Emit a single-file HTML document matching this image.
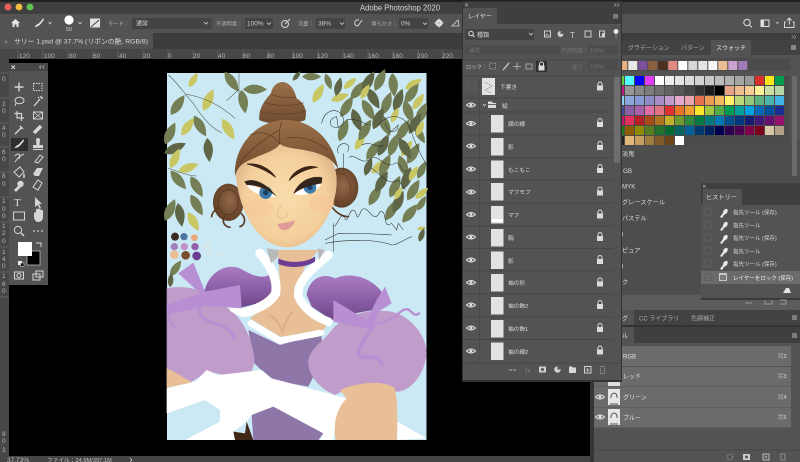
<!DOCTYPE html>
<html lang="ja"><head><meta charset="utf-8"><title>Adobe Photoshop 2020</title>
<style>
html,body{margin:0;padding:0;background:#000;width:800px;height:462px;overflow:hidden}
svg{display:block;filter:blur(.35px)}
text{font-family:"Liberation Sans","Noto Sans CJK JP",sans-serif;fill:#cfcfcf;font-size:6px}
.r{fill:#b5b5b5;font-size:6.5px}
.ic{fill:none;stroke:#d6d6d6}
.f{fill:#d6d6d6}
.o{font-size:5.300px;fill:#b0b0b0}
.ly{font-size:5.700px;fill:#dcdcdc}
.h{font-size:5.500px;fill:#d6d6d6}
.t{font-size:6px;fill:#a8a8a8}
.li{font-size:6.200px;fill:#dcdcdc}
.dim{font-size:5.500px;fill:#737373}
</style></head><body>
<svg width="800" height="462" viewBox="0 0 800 462" xmlns="http://www.w3.org/2000/svg">
<defs>
<path id="l" d="M-36,0 Q-6,-28 36,0 Q-6,28 -36,0Z"/>
<g id="eye"><path d="M-4.500,0 Q0,-4 4.500,0 Q0,4 -4.500,0Z" fill="none" stroke="#e0e0e0" stroke-width="1"/><circle r="1.400" fill="#e0e0e0"/></g>
<g id="lock"><rect x="-3" y="-1" width="6" height="5" fill="#dcdcdc"/><path d="M-2,-1 V-2.500 A2,2 0 0 1 2,-2.500 V-1" fill="none" stroke="#dcdcdc"/></g>
<pattern id="ck" width="3" height="3" patternUnits="userSpaceOnUse"><rect width="3" height="3" fill="#ececec"/><rect width="1.500" height="1.500" fill="#d8d8d8"/><rect x="1.500" y="1.500" width="1.500" height="1.500" fill="#d8d8d8"/></pattern>
<linearGradient id="sh" x1="0" y1="0" x2="0" y2="1"><stop offset="0" stop-color="#a97bc2"/><stop offset=".55" stop-color="#8a5ea6"/><stop offset="1" stop-color="#6d4688"/></linearGradient>
<radialGradient id="sk" cx=".5" cy=".52" r=".56"><stop offset="0" stop-color="#f9dcaa"/><stop offset=".72" stop-color="#f3cf9c"/><stop offset="1" stop-color="#e0b688"/></radialGradient>
<linearGradient id="hr" x1="0" y1="0" x2="0" y2="1"><stop offset="0" stop-color="#9a7049"/><stop offset="1" stop-color="#6f4a2e"/></linearGradient>
<radialGradient id="bn" cx=".55" cy=".45" r=".6"><stop offset="0" stop-color="#96694a"/><stop offset="1" stop-color="#5a3a22"/></radialGradient>
<g id="brsh"><path d="M-3,4 C-1,1 1,-1 3,-3 L4,-5 L5,-3 C3,-1 1,3 -3,4Z" fill="#e0e0e0"/><path d="M-4,4 L-1,1" stroke="#e0e0e0" fill="none"/></g>
<path id="smg" d="M0,10 L3,6 C3,1 10,0 7,6 L4,8 L2,11Z" fill="#e8e8e8"/>
</defs>

<rect width="800" height="462" fill="#000"/>

<!-- art -->
<rect x="167" y="73" width="259.500" height="367" fill="#cbe9f4"/>
<g transform="translate(165,70) scale(.33333)">
<g fill="#757f55">
<use href="#l" transform="translate(38,105) rotate(-55)"/><use href="#l" transform="translate(105,168) rotate(60)"/><use href="#l" transform="translate(15,190) rotate(-65)"/><use href="#l" transform="translate(40,330) rotate(50)"/><use href="#l" transform="translate(95,350) rotate(60)"/><use href="#l" transform="translate(95,405) rotate(60)"/><use href="#l" transform="translate(15,420) rotate(-65)"/><use href="#l" transform="translate(200,35) rotate(55)"/><use href="#l" transform="translate(235,95) rotate(80)"/><use href="#l" transform="translate(270,58)"/><use href="#l" transform="translate(440,20) scale(.8)"/>
</g>
<g fill="#5f6647"><use href="#l" transform="translate(130,240) rotate(85)"/><use href="#l" transform="translate(30,235) rotate(-25)"/><use href="#l" transform="translate(45,435) rotate(80)"/><use href="#l" transform="translate(395,18) rotate(-50) scale(.5)"/></g>
<g fill="#c9c664"><use href="#l" transform="translate(85,30) rotate(-60) scale(.7)"/><use href="#l" transform="translate(130,90) rotate(-65)"/><use href="#l" transform="translate(68,170) rotate(-55) scale(.9)"/><use href="#l" transform="translate(190,178) rotate(60)"/><use href="#l" transform="translate(30,265) rotate(-65) scale(.9)"/><use href="#l" transform="translate(70,293) rotate(-20) scale(.9)"/><use href="#l" transform="translate(85,455) rotate(60) scale(.9)"/><use href="#l" transform="translate(460,70) rotate(-60) scale(.9)"/></g>
<!-- right foliage -->
<g fill="#c9c664">
<use href="#l" transform="translate(525,82) rotate(-20) scale(.8)"/><use href="#l" transform="translate(555,40) rotate(-40) scale(.7)"/><use href="#l" transform="translate(745,42) rotate(-30) scale(.8)"/><use href="#l" transform="translate(760,95) rotate(-55) scale(.8)"/><use href="#l" transform="translate(585,215) rotate(-60) scale(.8)"/><use href="#l" transform="translate(725,235) rotate(-55) scale(.8)"/><use href="#l" transform="translate(640,290) rotate(-45) scale(.8)"/><use href="#l" transform="translate(770,370) rotate(-40) scale(.7)"/><use href="#l" transform="translate(770,475) rotate(-10) scale(.4)"/>
</g>
<g fill="#757f55">
<use href="#l" transform="translate(490,35) rotate(70) scale(.7)"/><use href="#l" transform="translate(580,60) rotate(-50)"/><use href="#l" transform="translate(645,30) rotate(-65)"/><use href="#l" transform="translate(685,45) rotate(85)"/><use href="#l" transform="translate(740,70) rotate(-55)"/><use href="#l" transform="translate(545,110) rotate(-60)"/><use href="#l" transform="translate(610,120) rotate(60)"/><use href="#l" transform="translate(665,100) rotate(-70)"/><use href="#l" transform="translate(730,125) rotate(70)"/><use href="#l" transform="translate(770,130) rotate(-65)"/><use href="#l" transform="translate(535,180) rotate(-70)"/><use href="#l" transform="translate(600,180) rotate(-60)"/><use href="#l" transform="translate(660,165) rotate(65)"/><use href="#l" transform="translate(715,180) rotate(-60)"/><use href="#l" transform="translate(765,195) rotate(60) scale(.8)"/><use href="#l" transform="translate(625,240) rotate(-55)"/><use href="#l" transform="translate(685,225) rotate(-70)"/><use href="#l" transform="translate(745,250) rotate(-60)"/><use href="#l" transform="translate(660,285) rotate(-65)"/><use href="#l" transform="translate(715,290) rotate(70)"/><use href="#l" transform="translate(770,300) rotate(-65) scale(.8)"/><use href="#l" transform="translate(630,375) rotate(-60)"/><use href="#l" transform="translate(690,350) rotate(-65)"/><use href="#l" transform="translate(745,360) rotate(-60)"/><use href="#l" transform="translate(680,420) rotate(-60)"/><use href="#l" transform="translate(735,430) rotate(-50)"/><use href="#l" transform="translate(770,400) rotate(-60) scale(.7)"/>
</g>
<g fill="#5f6647">
<use href="#l" transform="translate(520,50) rotate(-75) scale(.8)"/><use href="#l" transform="translate(610,35) rotate(-60)"/><use href="#l" transform="translate(625,85) rotate(60)"/><use href="#l" transform="translate(700,90) rotate(-70)"/><use href="#l" transform="translate(575,150) rotate(70)"/><use href="#l" transform="translate(640,145) rotate(-65)"/><use href="#l" transform="translate(750,160) rotate(-60)"/><use href="#l" transform="translate(655,225) rotate(-65)"/><use href="#l" transform="translate(720,235) rotate(60)"/><use href="#l" transform="translate(610,290) rotate(-70) scale(.8)"/><use href="#l" transform="translate(650,335) rotate(-60)"/><use href="#l" transform="translate(725,325) rotate(-70)"/><use href="#l" transform="translate(770,495) rotate(-70) scale(.6)"/><use href="#l" transform="translate(700,395) rotate(-65)"/>
</g>
<g fill="#c9c664">
<use href="#l" transform="translate(600,65) rotate(-60) scale(.7)"/><use href="#l" transform="translate(690,135) rotate(-65) scale(.7)"/><use href="#l" transform="translate(765,175) rotate(-65) scale(.7)"/><use href="#l" transform="translate(745,310) rotate(-60) scale(.7)"/><use href="#l" transform="translate(700,370) rotate(-60) scale(.6)"/>
</g>
<!-- branches -->
<g fill="none" stroke="#4c4d42" stroke-width="1.600">
<path d="M10,15 C40,40 60,75 85,100 C110,140 140,175 170,188"/><path d="M60,72 C110,80 160,100 210,145"/><path d="M10,295 C40,305 70,318 95,318"/><path d="M222,10 V90 M185,92 L222,58"/>
</g>
<!-- bun top -->
<path d="M283,150 C280,115 300,90 318,70 C322,45 345,30 362,38 C385,48 390,70 395,85 C420,100 428,125 420,150 C390,165 310,165 283,150Z" fill="url(#hr)"/>
<g fill="none" stroke="#5f3d24" stroke-width="2"><path d="M316,72 C340,82 370,84 394,82"/><path d="M297,98 C340,110 390,108 416,98"/><path d="M285,125 C330,135 390,135 424,122"/></g>
<!-- side buns -->
<ellipse cx="190" cy="397" rx="46" ry="56" fill="url(#bn)"/><ellipse cx="190" cy="397" rx="30" ry="38" fill="none" stroke="#5c3a20" stroke-width="3"/>
<ellipse cx="530" cy="353" rx="50" ry="60" fill="url(#bn)"/><ellipse cx="525" cy="353" rx="32" ry="42" fill="none" stroke="#6d4729" stroke-width="3"/>
<path d="M160,410 C150,420 140,430 140,440 M178,440 C170,455 178,470 195,472 M228,430 C245,445 240,465 225,470 M500,410 C515,430 530,440 550,440" fill="none" stroke="#5a3a22" stroke-width="5" stroke-linecap="round"/>
<!-- face -->
<path d="M212,300 C212,230 290,215 365,215 C450,215 518,250 515,340 C512,425 450,532 365,532 C285,532 218,430 212,300Z" fill="url(#sk)"/>
<ellipse cx="280" cy="415" rx="45" ry="28" fill="#f5c796" opacity=".55"/><ellipse cx="470" cy="400" rx="38" ry="28" fill="#f5c796" opacity=".55"/>
<!-- hair dome -->
<path d="M210,318 C205,240 260,160 350,150 C440,145 505,210 520,298 C505,270 480,255 440,245 C400,235 360,235 345,222 C330,245 280,255 245,275 C225,285 215,300 210,318Z" fill="url(#hr)"/>
<g fill="none" stroke="#573720" stroke-width="2"><path d="M345,222 C340,195 345,170 350,155"/><path d="M345,222 C320,190 290,180 255,195"/><path d="M365,205 C400,195 450,210 490,240"/><path d="M340,180 C300,210 260,230 225,280"/></g>
<!-- brows / eyes -->
<path d="M246,282 C280,278 315,295 332,322 C310,305 280,290 246,282Z" fill="#3b2416" stroke="#3b2416" stroke-width="2"/>
<path d="M458,292 C425,282 385,300 372,332 C395,310 425,296 458,292Z" fill="#3b2416" stroke="#3b2416" stroke-width="2"/>
<path d="M245,345 C270,345 315,365 335,380 C310,385 265,375 245,345Z" fill="#fff"/><circle cx="302" cy="368" r="19" fill="#3e7bab"/><circle cx="302" cy="368" r="8" fill="#1d3f62"/>
<path d="M470,340 C450,345 405,355 388,372 C415,380 455,370 470,340Z" fill="#fff"/><circle cx="435" cy="352" r="19" fill="#3e7bab"/><circle cx="435" cy="352" r="8" fill="#1d3f62"/>
<path d="M238,335 C270,320 310,345 335,380 C300,352 270,345 245,345Z" fill="#33241c"/>
<path d="M472,322 C440,315 400,332 385,372 C410,352 440,345 470,340Z" fill="#33241c"/>
<path d="M350,405 C335,420 330,440 348,445 C358,447 365,440 368,430" fill="none" stroke="#e5b088" stroke-width="2"/>
<path d="M337,463 C350,458 375,458 390,450 C385,470 370,482 355,480 C345,478 340,470 337,463Z" fill="#df9b9a"/>
<!-- palette -->
<circle cx="30" cy="500" r="12" fill="#3a2a20"/><circle cx="57" cy="500" r="11" fill="#4f76a0"/><circle cx="88" cy="503" r="10" fill="#e8a878"/><circle cx="28" cy="530" r="11" fill="#a080b8"/><circle cx="58" cy="530" r="11" fill="#c090c8"/><circle cx="90" cy="530" r="11" fill="#9060a8"/><circle cx="28" cy="554" r="13" fill="#eebd94"/><circle cx="62" cy="556" r="13" fill="#7a4f30"/><circle cx="95" cy="558" r="13" fill="#6a3c90"/>
<text x="115" y="552" style="font-size:48px;fill:#dfe2dc">5</text><text x="150" y="560" style="font-size:28px;fill:#dfe2dc">pt</text>
<!-- sketch lines -->
<g fill="none" stroke="#2c2f2e" stroke-width="1.600">
<path d="M470,160 C475,130 500,115 520,125 C545,140 540,175 510,172 C490,170 490,145 515,140 L520,175 M545,150 C570,145 590,155 610,165"/>
<path d="M640,165 C660,135 715,125 735,175 C750,220 770,260 785,285 M660,160 C670,190 695,195 700,165 L672,190"/>
<path d="M520,250 C510,225 540,210 552,230 L548,245 M535,250 V300 M552,262 C575,250 590,290 620,265 C640,250 660,300 690,280 C705,270 715,320 725,300 M590,225 C620,210 640,240 655,225 M620,295 C650,315 670,350 700,330 L722,360"/>
<path d="M508,470 C520,460 525,430 538,440 C548,470 550,420 565,420 C580,425 570,465 590,420 C610,400 625,470 645,425 C670,420 650,480 680,460 L695,480 L700,460 L715,480"/>
<path d="M480,510 L520,490 C570,490 620,490 680,495 M480,520 C560,505 640,510 680,525 C700,525 720,505 742,500 M505,460 V545"/>
</g>
</g>

<g transform="translate(165,250) scale(.33333)">
<use href="#l" transform="translate(32,55) rotate(-55) scale(.8)" fill="#757f55"/><use href="#l" transform="translate(17,90) rotate(-85) scale(.6)" fill="#5f6647"/>
<path d="M340,0 L460,0 L420,50 L388,130 L425,170 L495,215 L470,245 L345,260 L255,205 L310,165 L345,130Z" fill="#e8bf96"/>
<path d="M310,195 C330,200 345,225 352,245 C360,220 370,195 385,185" fill="none" stroke="#dcae82" stroke-width="6"/>
<path d="M118,125 C130,70 180,38 225,55 C260,75 290,90 318,72 L322,130 L300,155 L230,172 L170,165 C150,145 130,130 118,125Z" fill="url(#sh)"/>
<path d="M425,135 C430,90 470,65 510,85 C550,68 610,75 650,125 L625,180 L580,188 L500,210 L440,170Z" fill="url(#sh)"/>
<path d="M250,240 L345,285 L470,250 L470,330 L430,410 L320,390 L268,340Z" fill="#8f76a8"/>
<path d="M5,115 C60,105 120,115 170,165 C230,190 265,270 268,330 C265,370 250,385 210,382 L130,365 L80,395 L5,410Z" fill="#bf9cca"/>
<path d="M500,240 C540,190 620,175 680,185 C740,200 785,260 785,310 C780,370 740,420 700,425 L540,420 L510,435 C450,410 425,360 430,330 C440,290 470,280 500,240Z" fill="#bf9cca"/>
<path d="M5,355 C30,365 60,385 82,397 L5,413Z" fill="#e8bf96"/>
<path d="M5,415 L90,395 L125,360 L160,375 L290,360 L320,385 L545,445 L510,530 L505,570 L465,570 L475,550 L325,470 L260,495 L240,520 L205,545 L210,570 L60,570 L165,515 L165,480 L120,450 L5,490Z" fill="#fff"/>
<path d="M260,495 L325,470 L475,550 L460,570 L265,570Z" fill="#8f76a8"/>
<path d="M205,545 L240,550 L245,515 L265,570 L210,570Z" fill="#3f2818"/>
<path d="M525,420 C580,395 660,390 690,415 C700,470 697,540 695,570 L512,570 C505,530 510,480 545,445Z" fill="#e8bf96"/>
<path d="M697,515 L785,565 L697,570Z" fill="#fff"/>
<!-- collar -->
<g fill="none" stroke="#fff" stroke-linecap="round" stroke-linejoin="round">
<path d="M285,10 C320,50 338,90 332,130 C315,160 280,175 235,190 L205,175" stroke-width="24"/>
<path d="M490,15 C440,60 395,90 400,140 C420,180 450,200 490,215" stroke-width="22"/>
<path d="M258,220 L345,272 L470,248" stroke-width="16"/>
<path d="M285,10 C320,50 338,90 332,130 C315,160 280,175 235,190" stroke-width="28" stroke-dasharray="2 8"/>
<path d="M490,15 C440,60 395,90 400,140 C420,180 450,200 490,215" stroke-width="26" stroke-dasharray="2 8"/>
<path d="M258,220 L345,272 L470,248" stroke-width="20" stroke-dasharray="2 8"/>
</g>
<path d="M305,-5 L340,0 L340,20 L318,40Z M458,-5 L480,0 L462,30Z" fill="#b9b9b9"/>
<path d="M340,25 C370,40 420,40 450,20 L450,35 C420,55 370,55 340,42Z" fill="#6c3f95"/>
<!-- ribbons -->
<g fill="#b78fd2">
<path d="M40,70 L85,38 L120,125 L225,105 L230,175 L125,168 L5,195 L5,165 L105,130Z"/>
<path d="M505,150 L605,210 L635,150 L660,110 L680,160 L640,185 L625,240 L505,215Z"/>
</g>
<g fill="none" stroke="#b78fd2" stroke-linecap="round">
<path d="M105,170 C95,235 190,205 208,265" stroke-width="9"/><path d="M625,225 C600,270 565,310 590,322 C620,322 645,318 650,342" stroke-width="11"/><path d="M640,220 C700,210 700,175 730,178 C745,190 750,200 762,190" stroke-width="7"/><path d="M12,190 C10,215 20,225 32,232" stroke-width="6"/>
</g>
</g>

<!-- rulers -->
<rect x="0" y="49" width="800" height="10" fill="#474747"/>
<rect x="0" y="49" width="9" height="413" fill="#474747"/>
<g stroke="#6a6a6a" stroke-width=".7">
<path d="M18,50V59M43,50V59M68,50V59M93,50V59M118,50V59M143,50V59M168,50V59M193,50V59M218,50V59M243,50V59M268,50V59M293,50V59M318,50V59M343,50V59M368,50V59M393,50V59M418,50V59M443,50V59"/>
<path d="M0,73H9M0,98H9M0,123H9M0,147H9M0,172H9M0,197H9M0,222H9M0,247H9M0,272H9M0,297H9"/>
</g>
<text class="r" x="19" y="58">120</text><text class="r" x="44" y="58">100</text><text class="r" x="69" y="58">80</text><text class="r" x="93" y="58">60</text><text class="r" x="119" y="58">40</text><text class="r" x="143" y="58">20</text><text class="r" x="168" y="58">0</text><text class="r" x="193" y="58">20</text><text class="r" x="218" y="58">40</text><text class="r" x="243" y="58">60</text><text class="r" x="267" y="58">80</text><text class="r" x="292" y="58">100</text><text class="r" x="317" y="58">120</text><text class="r" x="343" y="58">140</text><text class="r" x="368" y="58">160</text><text class="r" x="392" y="58">180</text><text class="r" x="417" y="58">200</text><text class="r" x="442" y="58">220</text>
<text class="r" x="2" y="81">0</text><text class="r" x="2" y="106">2</text><text class="r" x="2" y="113">0</text><text class="r" x="2" y="130">4</text><text class="r" x="2" y="137">0</text><text class="r" x="2" y="154">6</text><text class="r" x="2" y="161">0</text><text class="r" x="2" y="178">8</text><text class="r" x="2" y="186">0</text><text class="r" x="2" y="203">1</text><text class="r" x="2" y="211">0</text><text class="r" x="2" y="218">0</text><text class="r" x="2" y="228">1</text><text class="r" x="2" y="235">2</text><text class="r" x="2" y="243">0</text><text class="r" x="2" y="254">1</text><text class="r" x="2" y="261">4</text><text class="r" x="2" y="268">0</text><text class="r" x="2" y="278">1</text><text class="r" x="2" y="286">6</text><text class="r" x="2" y="293">0</text><text class="r" x="2" y="436">8</text><text class="r" x="2" y="443">0</text><text class="r" x="2" y="452">3</text>

<!-- top chrome -->
<rect width="800" height="2" fill="#1f1f1f"/>
<rect y="2" width="800" height="12" fill="#3f3f3f"/>
<rect y="14" width="800" height="19" fill="#535353"/>
<rect y="33" width="800" height="16" fill="#3c3c3c"/>
<rect y="33" width="153" height="16" fill="#535353"/>
<circle cx="8" cy="7" r="3.400" fill="#ee5f57"/><circle cx="19" cy="7" r="3.400" fill="#f5bd3f"/><circle cx="30" cy="7" r="3.400" fill="#5fc750"/>
<text x="360" y="10.500" textLength="80" lengthAdjust="spacingAndGlyphs" style="font-size:8.500px;fill:#d5d5d5">Adobe Photoshop 2020</text>

<!-- options -->
<path d="M11,23 L15.500,19 L20,23 L18.500,23 V27 H16.500 V24.500 H14.500 V27 H12.500 V23Z" fill="#e6e6e6"/>
<use href="#brsh" transform="translate(39,23)"/>
<path d="M48.500,22 L50,24 L51.500,22M78.500,22 L80,24 L81.500,22" class="ic" stroke-width=".8"/>
<circle cx="69" cy="20" r="4.600" fill="#fff"/><text x="66" y="31" style="font-size:5.500px">50</text>
<rect x="90" y="18.500" width="10" height="9" fill="#e2e2e2"/><path d="M91,27 L99,20" stroke="#444" fill="none"/>
<path d="M104,17V29M212,17V29" stroke="#484848"/>
<text x="108" y="25.500" class="o">モード：</text>
<rect x="132" y="18" width="79" height="11" fill="#434343"/><text x="136" y="25.500" style="font-size:6px">通常</text><path d="M204,22 L206,24 L208,22" class="ic" stroke-width=".8"/>
<text x="216" y="25.500" class="o">不透明度：</text>
<rect x="245" y="18" width="28" height="11" fill="#434343"/><text x="247" y="25.500" style="font-size:6.500px">100%</text><path d="M267,22.500 L269,24.500 L271,22.500" class="ic" stroke-width=".8"/>
<circle cx="285" cy="24" r="3.500" class="ic"/><path d="M285,24 L290,19" class="ic"/>
<text x="298" y="25.500" class="o">流量：</text>
<rect x="316" y="18" width="29" height="11" fill="#434343"/><text x="318" y="25.500" style="font-size:6.500px">38%</text><path d="M340,22.500 L342,24.500 L344,22.500" class="ic" stroke-width=".8"/>
<path d="M359,20 C354,19 353,26 358,26 M358,26 L362,20" class="ic"/>
<text x="371" y="25.500" class="o">滑らかさ：</text>
<rect x="399" y="18" width="29" height="11" fill="#434343"/><text x="401" y="25.500" style="font-size:6.500px">0%</text><path d="M423,22.500 L425,24.500 L427,22.500" class="ic" stroke-width=".8"/>
<circle cx="439" cy="23" r="2.500" fill="none" stroke="#e6e6e6" stroke-width="2"/><path d="M439,18.500V27.500M434.500,23H443.500" stroke="#e6e6e6" stroke-width="1"/>
<path d="M452,26 H459 L458,20Z" class="ic" stroke-width=".8"/>
<text x="4" y="44" style="font-size:6.500px;fill:#aaa">×</text>
<text x="14" y="43.500" textLength="134" lengthAdjust="spacingAndGlyphs" style="font-size:6.500px;fill:#dadada">サリー 1.psd @ 37.7% (リボンの艶, RGB/8)</text>

<!-- toolbar -->
<rect x="9" y="63" width="39" height="222" fill="#535353"/>
<rect x="9" y="63" width="39" height="8" fill="#454545"/>
<path d="M11.500,65.500 L15,69M15,65.500 L11.500,69" stroke="#ddd" stroke-width=".9"/>
<path d="M41,65.500 L39.500,67 L41,68.500M44,65.500 L42.500,67 L44,68.500" class="ic" stroke-width=".6"/>
<rect x="11" y="138" width="17" height="13" fill="#2f2f2f"/>
<g class="ic">
<path d="M19,82.500V91.500M14.500,87H23.500" stroke-width="1.400"/>
<rect x="33.500" y="83.500" width="8.500" height="7" stroke-dasharray="1.500 1"/>
<ellipse cx="19.500" cy="100.500" rx="4.500" ry="3.300"/><path d="M16,103 L15,106"/>
<path d="M34,106 L40,99 M41,96V98M43,98H41M38,97 L39,98" stroke-width="1.300"/>
<path d="M17,111V118H24M14.500,113.500H21.500V121" stroke-width="1.200"/>
<rect x="33.500" y="112" width="9" height="7"/><path d="M33.500,112 L42.500,119M42.500,112 L33.500,119" stroke-width=".7"/>
<path d="M15,134 L21,128 M20,126 L23,129" stroke-width="1.500"/>
<path d="M34,133 L41,126" stroke-width="3.500"/>
<path d="M15,162 C20,155 22,155 24,154M15,156 C17,153 22,153 19,159"/>
<path d="M35,162 L40,155 L43,157 L38,163Z"/>
<path d="M14,172 L20,167 L24,172 L19,177Z"/><path d="M24,174 V178" stroke-width="1.500"/>
<rect x="13.500" y="212" width="11" height="8"/>
<path d="M33,187 L38,180 L42,183 L38,190Z"/>
<circle cx="18" cy="230" r="3.600"/><path d="M21,233 L24,236" stroke-width="1.500"/>
<rect x="14.500" y="272" width="9" height="7"/><circle cx="19" cy="275.500" r="2"/>
<rect x="33" y="274" width="7" height="6"/><rect x="36" y="271" width="7" height="6"/>
</g>
<g class="f">
<use href="#brsh" transform="translate(19,144)"/>
<path d="M38,138 a2,2 0 0 1 2,2 L39.500,145 H43 V148 H33 V145 H36.500 L36,140 a2,2 0 0 1 2,-2Z"/><rect x="33" y="149" width="10" height="1"/>
<path d="M33,174 L37,168 H43 L39,176 H35Z M36,176 L34,179"/>
<path d="M14,190 L20,184 L22,186 L16,192Z"/><circle cx="20.500" cy="184" r="3.200"/>
<path d="M34,214 C34,210 35,209 36,211 V208 C36,206 38,206 38,208 C38,206 40,206 40,208 C42,207 43,208 43,210 V215 C43,218 41,220 38,220 C36,220 34,218 34,214Z" transform="translate(0,2)"/>
<path d="M35,197 L35,207 L37.500,205 L40,209 L41,208 L39,204 L42,204Z"/>
<circle cx="34" cy="231" r=".9"/><circle cx="38" cy="231" r=".9"/><circle cx="42" cy="231" r=".9"/>
</g>
<text x="14" y="206" style="font-family:'Liberation Serif',serif;font-size:11px;fill:#ddd">T</text>
<rect x="27" y="251" width="13" height="14" fill="#000" stroke="#bcbcbc" stroke-width=".8"/>
<rect x="18" y="242" width="14" height="14" fill="#fff"/>
<path d="M36,243 H41 V247" class="ic"/>
<rect x="18" y="261" width="4" height="4" fill="#eee"/><rect x="20.500" y="263" width="3.500" height="3.500" fill="#111" stroke="#eee" stroke-width=".5"/>

<!-- right dock background -->
<rect x="622" y="33" width="178" height="7" fill="#3d3d3d"/>
<rect x="622" y="40" width="178" height="15" fill="#424242"/>
<rect x="711" y="40" width="40" height="15" fill="#535353"/>
<rect x="622" y="55" width="178" height="86" fill="#535353"/>
<rect x="622" y="58" width="168" height="13" fill="#4b4b4b"/>
<rect x="622" y="141" width="178" height="154" fill="#4d4d4d"/>
<rect x="622" y="295" width="178" height="15" fill="#5c5c5c"/>
<text x="628" y="50" class="t">グラデーション</text>
<text x="681" y="50" class="t">パターン</text>
<text x="716" y="50" class="t" style="fill:#e3e3e3">スウォッチ</text>
<rect x="791" y="45" width="5" height="5" fill="#8a8a8a"/>
<path d="M794,35 L796,37 L794,39M791.500,35 L793.500,37 L791.500,39" class="ic" stroke-width=".5"/>
<circle cx="747" cy="22.500" r="3.200" fill="none" stroke="#e0e0e0"/><path d="M749.500,25 L752,27.500" stroke="#e0e0e0"/>
<rect x="761" y="20" width="8" height="6.500" fill="none" stroke="#e0e0e0"/><rect x="761" y="20" width="3" height="6.500" fill="#e0e0e0"/>
<path d="M776,22 L777.500,23.500 L779,22" class="ic" stroke-width=".7"/>
<path d="M786,22 H784.500 V27.500 H794 V22 H792.500M789.300,24.500 V18M787,20.500 L789.300,18 L791.500,20.500" class="ic"/>
<!-- favs -->
<rect x="620" y="61" width="7.300" height="9" fill="#e8b080"/><rect x="628.300" y="61" width="9" height="9" fill="#e8e8e8"/><rect x="638.300" y="61" width="9" height="9" fill="#7b4f9b"/><rect x="648.300" y="61" width="9" height="9" fill="#8e6040"/><rect x="658.300" y="61" width="9" height="9" fill="#4c3020"/><rect x="668.300" y="61" width="9" height="9" fill="#e08a80"/><rect x="678.300" y="61" width="9" height="9" fill="#fff"/><rect x="688.300" y="61" width="9" height="9" fill="#d6d6d6"/><rect x="698.300" y="61" width="9" height="9" fill="#e5e5e5"/><rect x="708.300" y="61" width="9" height="9" fill="#f7f7f7"/><rect x="718.300" y="61" width="9" height="9" fill="#ecbd94"/><rect x="728.300" y="61" width="9" height="9" fill="#caa2d0"/><rect x="738.300" y="61" width="9" height="9" fill="#a17cb8"/>
<!-- swatch grid -->
<rect x="622" y="76" width="168" height="70" fill="#4b4b4b"/>
<rect x="622" y="76" width="2" height="9" fill="#5ed43f"/><rect x="625" y="76" width="9" height="9" fill="#5ff"/><rect x="635" y="76" width="9" height="9" fill="#00f"/><rect x="645" y="76" width="9" height="9" fill="#e03cf5"/><rect x="655" y="76" width="9" height="9" fill="#fff"/><rect x="665" y="76" width="9" height="9" fill="#eee"/><rect x="675" y="76" width="9" height="9" fill="#e4e4e4"/><rect x="685" y="76" width="9" height="9" fill="#dcdcdc"/><rect x="695" y="76" width="9" height="9" fill="#d3d3d3"/><rect x="705" y="76" width="9" height="9" fill="#c8c8c8"/><rect x="715" y="76" width="9" height="9" fill="#bcbcbc"/><rect x="725" y="76" width="9" height="9" fill="#b0b0b0"/><rect x="735" y="76" width="9" height="9" fill="#a5a5a5"/><rect x="745" y="76" width="9" height="9" fill="#9a9a9a"/><rect x="755" y="76" width="9" height="9" fill="#d9302a"/><rect x="765" y="76" width="9" height="9" fill="#fce61c"/><rect x="775" y="76" width="9" height="9" fill="#009b4d"/>
<rect x="622" y="86" width="2" height="9" fill="#c71585"/><rect x="625" y="86" width="9" height="9" fill="#969696"/><rect x="635" y="86" width="9" height="9" fill="#888"/><rect x="645" y="86" width="9" height="9" fill="#7d7d7d"/><rect x="655" y="86" width="9" height="9" fill="#707070"/><rect x="665" y="86" width="9" height="9" fill="#636363"/><rect x="675" y="86" width="9" height="9" fill="#565656"/><rect x="685" y="86" width="9" height="9" fill="#484848"/><rect x="695" y="86" width="9" height="9" fill="#333"/><rect x="705" y="86" width="9" height="9" fill="#1c1c1c"/><rect x="715" y="86" width="9" height="9" fill="#000"/><rect x="725" y="86" width="9" height="9" fill="#e8a586"/><rect x="735" y="86" width="9" height="9" fill="#eebd8e"/><rect x="745" y="86" width="9" height="9" fill="#f7cf94"/><rect x="755" y="86" width="9" height="9" fill="#fdf29a"/><rect x="765" y="86" width="9" height="9" fill="#cbe0a3"/><rect x="775" y="86" width="9" height="9" fill="#b6d7a5"/>
<rect x="622" y="96" width="2" height="9" fill="#8ed4f0"/><rect x="625" y="96" width="9" height="9" fill="#8aa8de"/><rect x="635" y="96" width="9" height="9" fill="#8a9ad6"/><rect x="645" y="96" width="9" height="9" fill="#8d8bc8"/><rect x="655" y="96" width="9" height="9" fill="#a78dc6"/><rect x="665" y="96" width="9" height="9" fill="#c29dcc"/><rect x="675" y="96" width="9" height="9" fill="#e5a9cf"/><rect x="685" y="96" width="9" height="9" fill="#e9a5ae"/><rect x="695" y="96" width="9" height="9" fill="#e36f4f"/><rect x="705" y="96" width="9" height="9" fill="#ed9a55"/><rect x="715" y="96" width="9" height="9" fill="#f2b95e"/><rect x="725" y="96" width="9" height="9" fill="#fff06b"/><rect x="735" y="96" width="9" height="9" fill="#bdd77b"/><rect x="745" y="96" width="9" height="9" fill="#94c77e"/><rect x="755" y="96" width="9" height="9" fill="#5bb17f"/><rect x="765" y="96" width="9" height="9" fill="#4cb3ad"/><rect x="775" y="96" width="9" height="9" fill="#43b3ea"/>
<rect x="622" y="106" width="2" height="9" fill="#4a4a9a"/><rect x="625" y="106" width="9" height="9" fill="#8a5fa8"/><rect x="635" y="106" width="9" height="9" fill="#aa5faa"/><rect x="645" y="106" width="9" height="9" fill="#df6ea8"/><rect x="655" y="106" width="9" height="9" fill="#e27383"/><rect x="665" y="106" width="9" height="9" fill="#e03030"/><rect x="675" y="106" width="9" height="9" fill="#e8742a"/><rect x="685" y="106" width="9" height="9" fill="#f0a030"/><rect x="695" y="106" width="9" height="9" fill="#fde52b"/><rect x="705" y="106" width="9" height="9" fill="#9fc543"/><rect x="715" y="106" width="9" height="9" fill="#53ac4a"/><rect x="725" y="106" width="9" height="9" fill="#009d57"/><rect x="735" y="106" width="9" height="9" fill="#00a09a"/><rect x="745" y="106" width="9" height="9" fill="#00a0e4"/><rect x="755" y="106" width="9" height="9" fill="#0068b7"/><rect x="765" y="106" width="9" height="9" fill="#0050a0"/><rect x="775" y="106" width="9" height="9" fill="#1d2d8f"/>
<rect x="622" y="116" width="2" height="9" fill="#c8106a"/><rect x="625" y="116" width="9" height="9" fill="#e0305f"/><rect x="635" y="116" width="9" height="9" fill="#b32025"/><rect x="645" y="116" width="9" height="9" fill="#a84a1a"/><rect x="655" y="116" width="9" height="9" fill="#ad7420"/><rect x="665" y="116" width="9" height="9" fill="#c2b02a"/><rect x="675" y="116" width="9" height="9" fill="#6e9a30"/><rect x="685" y="116" width="9" height="9" fill="#2f8a3d"/><rect x="695" y="116" width="9" height="9" fill="#007a40"/><rect x="705" y="116" width="9" height="9" fill="#007b7b"/><rect x="715" y="116" width="9" height="9" fill="#0078b5"/><rect x="725" y="116" width="9" height="9" fill="#004f90"/><rect x="735" y="116" width="9" height="9" fill="#00377f"/><rect x="745" y="116" width="9" height="9" fill="#141c6e"/><rect x="755" y="116" width="9" height="9" fill="#3f1a78"/><rect x="765" y="116" width="9" height="9" fill="#650f73"/><rect x="775" y="116" width="9" height="9" fill="#950f6c"/>
<rect x="622" y="126" width="2" height="9" fill="#1f7a1f"/><rect x="625" y="126" width="9" height="9" fill="#8b5c00"/><rect x="635" y="126" width="9" height="9" fill="#8f8a00"/><rect x="645" y="126" width="9" height="9" fill="#587c20"/><rect x="655" y="126" width="9" height="9" fill="#21702c"/><rect x="665" y="126" width="9" height="9" fill="#006a30"/><rect x="675" y="126" width="9" height="9" fill="#006560"/><rect x="685" y="126" width="9" height="9" fill="#00609a"/><rect x="695" y="126" width="9" height="9" fill="#00396e"/><rect x="705" y="126" width="9" height="9" fill="#00215f"/><rect x="715" y="126" width="9" height="9" fill="#000050"/><rect x="725" y="126" width="9" height="9" fill="#2c0050"/><rect x="735" y="126" width="9" height="9" fill="#4e0050"/><rect x="745" y="126" width="9" height="9" fill="#7d0049"/><rect x="755" y="126" width="9" height="9" fill="#7c001c"/><rect x="765" y="126" width="9" height="9" fill="#d8c8a8"/><rect x="775" y="126" width="9" height="9" fill="#b0a088"/>
<rect x="622" y="136" width="2" height="9" fill="#222"/><rect x="625" y="136" width="9" height="9" fill="#e0b97a"/><rect x="635" y="136" width="9" height="9" fill="#c79f60"/><rect x="645" y="136" width="9" height="9" fill="#a17c40"/><rect x="655" y="136" width="9" height="9" fill="#805a28"/><rect x="665" y="136" width="9" height="9" fill="#6b4418"/><rect x="675" y="136" width="9" height="9" fill="#fff"/>
<rect x="792" y="76" width="5" height="100" fill="#6a6a6a"/>
<text class="li" x="622" y="156">淡鬼</text><text class="li" x="623" y="173">GB</text><text class="li" x="622" y="188.500">MYK</text><text class="li" x="622" y="204.500">グレースケール</text><text class="li" x="622" y="220.500">パステル</text><text class="li" x="622" y="236.500">l</text><text class="li" x="622" y="252.500">ピュア</text><text class="li" x="622" y="268.500">l</text><text class="li" x="622" y="284.500">ク</text>

<!-- history -->
<rect x="701" y="183" width="99" height="117" fill="#535353"/>
<rect x="701" y="183" width="99" height="22" fill="#3f3f3f"/>
<rect x="703" y="189" width="39" height="16" fill="#535353"/>
<path d="M703,185 L705.500,187.500 M705.500,185 L703,187.500" stroke="#aaa" stroke-width=".7"/>
<text x="706" y="199.500" class="t" style="fill:#dcdcdc;font-size:6.200px">ヒストリー</text>
<rect x="701" y="271" width="99" height="13" fill="#6b6b6b"/>
<g fill="none" stroke="#5f5f5f"><rect x="705" y="208" width="6" height="7"/><rect x="705" y="221" width="6" height="7"/><rect x="705" y="234" width="6" height="7"/><rect x="705" y="247" width="6" height="7"/><rect x="705" y="260" width="6" height="7"/><rect x="705" y="273.500" width="6" height="7"/></g>
<use href="#smg" transform="translate(720,207)"/><use href="#smg" transform="translate(720,220)"/><use href="#smg" transform="translate(720,233)"/><use href="#smg" transform="translate(720,246)"/><use href="#smg" transform="translate(720,259)"/>
<rect x="719" y="273" width="8" height="8" fill="#c9c9c9"/><rect x="720" y="275" width="6" height="5" fill="#7a7a7a"/>
<text class="h" x="733" y="214.500">指先ツール (保存)</text><text class="h" x="733" y="227.500">指先ツール</text><text class="h" x="733" y="240">指先ツール (保存)</text><text class="h" x="733" y="253.500">指先ツール</text><text class="h" x="733" y="266">指先ツール (保存)</text><text class="h" x="733" y="280" style="fill:#eee">レイヤーをロック (保存)</text>
<path d="M783,293 L786,288 H789 L791,293Z" fill="#e4e4e4"/>
<rect x="701" y="298" width="99" height="2" fill="#3a3a3a"/>
<path d="M745,303H752M765,300V304H772V300M780,300H786V304H780" stroke="#9a9a9a" fill="none"/>

<!-- lower dock -->
<rect x="590" y="310" width="210" height="152" fill="#535353"/>
<rect x="590" y="310" width="4" height="152" fill="#363636"/>
<rect x="594" y="310" width="206" height="15" fill="#424242"/>
<rect x="594" y="327" width="206" height="16" fill="#3f3f3f"/>
<rect x="594" y="325" width="206" height="2" fill="#333"/>
<rect x="594" y="310" width="40" height="15" fill="#535353"/>
<rect x="594" y="327" width="40" height="16" fill="#535353"/>
<text x="622" y="320.500" class="t" style="fill:#ddd">グ</text>
<text x="639" y="320.500" class="t">CC ライブラリ</text>
<text x="691" y="320.500" class="t">色調補正</text>
<text x="622" y="338" class="t" style="fill:#ddd">ル</text>
<rect x="792" y="315" width="5" height="5" fill="#7d7d7d"/><rect x="792" y="333" width="5" height="5" fill="#7d7d7d"/>
<rect x="594" y="346" width="197" height="20" fill="#6b6b6b"/><rect x="594" y="367" width="197" height="19.500" fill="#6b6b6b"/><rect x="594" y="387" width="197" height="20" fill="#6b6b6b"/><rect x="594" y="407.500" width="197" height="20" fill="#6b6b6b"/>
<text x="623" y="358.500" class="t" style="fill:#e2e2e2">RGB</text><text x="623" y="378.500" class="t" style="fill:#e2e2e2">レッド</text><text x="623" y="399.500" class="t" style="fill:#e2e2e2">グリーン</text><text x="623" y="420" class="t" style="fill:#e2e2e2">ブルー</text>
<text x="778" y="358" style="font-size:5.500px;fill:#dedede">⌘2</text><text x="778" y="378" style="font-size:5.500px;fill:#dedede">⌘3</text><text x="778" y="399" style="font-size:5.500px;fill:#dedede">⌘4</text><text x="778" y="419" style="font-size:5.500px;fill:#dedede">⌘5</text>
<use href="#eye" transform="translate(600,397)"/><use href="#eye" transform="translate(600,417)"/>
<rect x="608" y="381" width="12" height="5" fill="#ddd"/><rect x="608" y="389" width="12" height="16" fill="#e6e6e6"/><rect x="608" y="409" width="12" height="16" fill="#e6e6e6"/><path d="M611,398 C610,392 618,391 617,398 M610,404H618" stroke="#555" fill="none"/><path d="M611,418 C610,412 618,411 617,418 M610,424H618" stroke="#555" fill="none"/>
<path d="M594,450H800" stroke="#484848"/>
<circle cx="730" cy="457" r="2.800" fill="none" stroke="#9c9c9c" stroke-dasharray="1 1"/>
<rect x="743" y="454" width="7" height="6" fill="#cfcfcf"/><circle cx="746.500" cy="457" r="1.500" fill="#555"/>
<rect x="763" y="454" width="6" height="6" fill="none" stroke="#bbb"/><path d="M766,455.500V458.500M764.500,457H767.500" stroke="#bbb" stroke-width=".7"/>
<path d="M780,454H786M781,455V460H785V455" fill="none" stroke="#8f8f8f"/>

<!-- layers panel -->
<rect x="462" y="1" width="160" height="381" fill="#333"/>
<rect x="463" y="2" width="158" height="378" fill="#535353"/>
<rect x="463" y="2" width="158" height="22" fill="#3f3f3f"/>
<rect x="463" y="8" width="34" height="16" fill="#535353"/>
<path d="M465,3.500 L468,6.500 M468,3.500 L465,6.500" stroke="#aaa" stroke-width=".7"/>
<path d="M614,3.500 L616,5 L614,6.500M617,3.500 L619,5 L617,6.500" stroke="#aaa" stroke-width=".6" fill="none"/>
<text x="468" y="18.500" class="t" style="fill:#e3e3e3">レイヤー</text>
<rect x="613" y="14" width="5" height="4.500" fill="#7d7d7d"/>
<rect x="465" y="29" width="69" height="11" fill="#434343" rx="1"/>
<circle cx="471" cy="33.500" r="2.200" fill="none" stroke="#ddd"/><path d="M472.500,35 L474.500,37" stroke="#ddd"/>
<text x="477" y="37" style="font-size:6px;fill:#d6d6d6">種類</text>
<path d="M529,33 L531,35 L533,33" class="ic" stroke-width=".8"/>
<rect x="544.500" y="31" width="6" height="6" fill="none" stroke="#cfcfcf"/><path d="M545.500,36 L547,34 L549,36" stroke="#cfcfcf" fill="none" stroke-width=".7"/>
<circle cx="560.500" cy="34" r="3" fill="#cfcfcf"/><path d="M560.500,31 A3,3 0 0 1 563.500,34 L560.500,34Z" fill="#535353"/>
<text x="570" y="38" style="font-size:8px;fill:#cfcfcf">T</text>
<rect x="585" y="31" width="6" height="6" fill="none" stroke="#cfcfcf"/>
<rect x="599.500" y="31" width="5" height="6" fill="none" stroke="#cfcfcf"/><rect x="602" y="33" width="3" height="4" fill="#cfcfcf"/>
<circle cx="616" cy="31.500" r="2.500" fill="#e6e6e6"/><rect x="615.500" y="34" width="1" height="4" fill="#888"/>
<rect x="465" y="45" width="95" height="10" fill="#4d4d4d"/>
<text x="469" y="52.500" class="dim">通常</text>
<text x="561" y="52.500" class="dim">不透明度：</text>
<rect x="588" y="45" width="30" height="10" fill="#4d4d4d"/><text x="590" y="52.500" class="dim">100%</text>
<path d="M463,60H621" stroke="#474747"/>
<text x="466" y="68.500" class="o" style="fill:#c8c8c8">ロック：</text>
<rect x="489.500" y="63" width="6" height="6" fill="none" stroke="#a0a0a0" stroke-dasharray="1 1"/>
<path d="M503,70 L509,63" stroke="#bdbdbd" stroke-width="1.400"/>
<path d="M517,62.500V70M513,66.500H521" stroke="#a8a8a8"/>
<rect x="526" y="64" width="6" height="5" fill="none" stroke="#a0a0a0"/>
<rect x="536" y="61" width="11" height="11" fill="#2f2f2f"/><use href="#lock" transform="translate(541.500,66.500)"/>
<text x="572" y="69" class="dim">塗り</text>
<rect x="588" y="61" width="30" height="10" fill="#4d4d4d"/><text x="590" y="68.500" class="dim">100%</text>
<path d="M463,76H613M463,98H613M463,112H613M463,135H613M463,157.500H613M463,180H613M463,203H613M463,226H613M463,248.500H613M463,271H613M463,294H613M463,317H613M463,339.500H613M463,363H621" stroke="#474747"/>
<path d="M479.500,77V363" stroke="#4a4a4a"/>
<rect x="614" y="77" width="6" height="86" fill="#6e6e6e" rx="2"/>
<rect x="468" y="82" width="7" height="8" fill="none" stroke="#5c5c5c"/>
<rect x="482" y="78" width="13" height="17" fill="url(#ck)"/><path d="M484,82 L492,86 L485,90 L491,93" stroke="#999" fill="none" stroke-width=".6"/>
<text x="500" y="89" class="ly">下書き</text>
<use href="#lock" transform="translate(600,86.500)"/>
<use href="#eye" transform="translate(471,105)"/>
<path d="M483,104 L484.500,106 L486,104" class="ic" stroke-width=".7"/>
<path d="M488,101.500 H492 L493,103 H496 V108 H488Z" fill="#dcdcdc"/><rect x="488" y="104" width="8" height="1" fill="#666"/>
<text x="502" y="108" class="ly">絵</text>
<!-- rows -->
<rect x="491" y="115" width="12.500" height="17.500" fill="url(#ck)"/><rect x="491" y="138" width="12.500" height="17.500" fill="url(#ck)"/><rect x="491" y="160.500" width="12.500" height="17.500" fill="url(#ck)"/><rect x="491" y="183" width="12.500" height="17.500" fill="url(#ck)"/><rect x="491" y="206" width="12.500" height="17.500" fill="url(#ck)"/><rect x="491" y="229" width="12.500" height="17.500" fill="url(#ck)"/><rect x="491" y="251.500" width="12.500" height="17.500" fill="url(#ck)"/><rect x="491" y="274" width="12.500" height="17.500" fill="url(#ck)"/><rect x="491" y="297" width="12.500" height="17.500" fill="url(#ck)"/><rect x="491" y="320" width="12.500" height="17.500" fill="url(#ck)"/><rect x="491" y="342.500" width="12.500" height="17.500" fill="url(#ck)"/><rect x="492" y="219" width="11" height="3" fill="#fff"/>
<text class="ly" x="508" y="126">顔の線</text><text class="ly" x="508" y="149">影</text><text class="ly" x="508" y="172">もこもこ</text><text class="ly" x="508" y="194">マフモフ</text><text class="ly" x="508" y="217">マフ</text><text class="ly" x="508" y="240">胸</text><text class="ly" x="508" y="263">影</text><text class="ly" x="508" y="285">袖の形</text><text class="ly" x="508" y="308">袖の飾2</text><text class="ly" x="508" y="331">袖の飾1</text><text class="ly" x="508" y="354">袖の線2</text>
<use href="#eye" transform="translate(471,123.500)"/><use href="#eye" transform="translate(471,146)"/><use href="#eye" transform="translate(471,169)"/><use href="#eye" transform="translate(471,192)"/><use href="#eye" transform="translate(471,214.500)"/><use href="#eye" transform="translate(471,237)"/><use href="#eye" transform="translate(471,260)"/><use href="#eye" transform="translate(471,282.500)"/><use href="#eye" transform="translate(471,305)"/><use href="#eye" transform="translate(471,328)"/><use href="#eye" transform="translate(471,351)"/>
<use href="#lock" transform="translate(600,123)"/><use href="#lock" transform="translate(600,146)"/><use href="#lock" transform="translate(600,169)"/><use href="#lock" transform="translate(600,191.500)"/><use href="#lock" transform="translate(600,214.500)"/><use href="#lock" transform="translate(600,237)"/><use href="#lock" transform="translate(600,260)"/><use href="#lock" transform="translate(600,282.500)"/><use href="#lock" transform="translate(600,305)"/><use href="#lock" transform="translate(600,328)"/><use href="#lock" transform="translate(600,350.500)"/>
<!-- layer footer -->
<path d="M509,370H516" stroke="#808080" stroke-width="2" stroke-dasharray="3 1"/>
<text x="525" y="373" style="font-size:7px;fill:#808080;font-style:italic">fx</text>
<rect x="539" y="366.500" width="7" height="6" fill="#cfcfcf"/><circle cx="542.500" cy="369.500" r="1.500" fill="#555"/>
<circle cx="557.500" cy="369.500" r="3.200" fill="#d0d0d0"/><path d="M557.500,366.300 A3.200,3.200 0 0 1 560.700,369.500 L557.500,369.500Z" fill="#555"/>
<path d="M569,366.500 H572 L573,367.500 H576 V373 H569Z" fill="#d6d6d6"/>
<rect x="584.500" y="366.500" width="6.500" height="6.500" fill="none" stroke="#d0d0d0"/><path d="M587.700,368V372M585.700,370H589.700" stroke="#d0d0d0" stroke-width=".8"/>
<path d="M600,366.500H605M600.500,368V373.500H604.500V368" fill="none" stroke="#7f7f7f"/>

<!-- status -->
<rect x="0" y="456" width="590" height="6" fill="#454545"/>
<text x="7" y="462" style="font-size:6.500px;fill:#bdbdbd">37.73%</text>
<text x="47" y="462" style="font-size:5.700px;fill:#bdbdbd">ファイル：24.9M/397.1M</text>
<path d="M130,458 L132,460 L130,462" class="ic" stroke-width=".7"/>
</svg>
</body></html>
